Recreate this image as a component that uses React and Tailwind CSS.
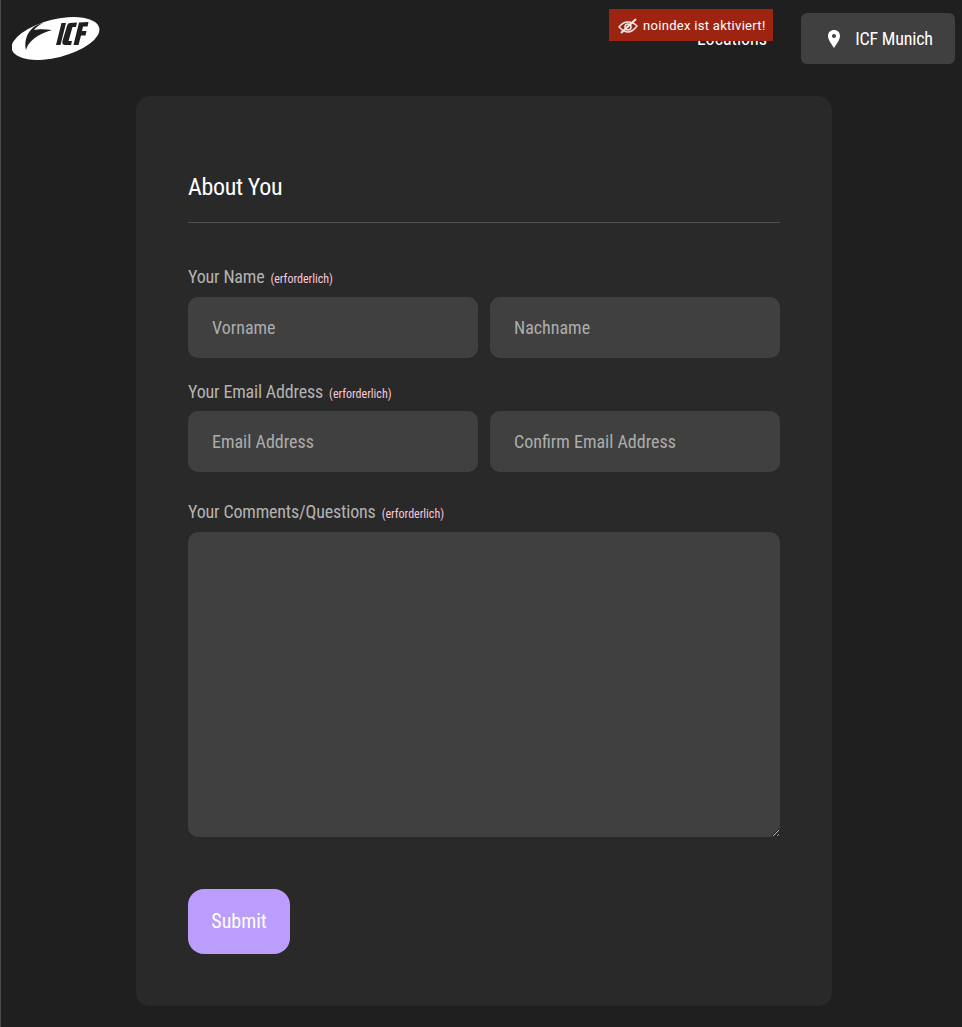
import React from "react";

const Req = () => (
  <span className="ml-[6px] text-[12px] tracking-normal text-[#f9c6dc]">(erforderlich)</span>
);

const Logo = () => (
  <svg width="88" height="45" viewBox="0 0 88 45" className="block">
    <ellipse cx="43.5" cy="22.5" rx="45" ry="19" transform="rotate(-14 43.5 22.5)" fill="#fff" />
    <path fill="#1f1f1f" d="M31 7C20 9 11 20 14 34C16 26 25 18 40 14C33 13 26 13 22 14C24 11 27 9 31 7Z" />
    <path fill="#1f1f1f" d="M49.5 7L54 7L48.5 29L44 29Z" />
    <path fill="#1f1f1f" d="M58 7L65 6.5L64 11L60.5 11L56.5 25L60 25L59 29L53.5 29C50.5 29 50 27 50.5 25L55 10C55.5 8 56.5 7 58 7Z" />
    <path fill="#1f1f1f" d="M67 6.5L76.5 6L75.5 10.5L71 10.5L70 15L74.5 15L73.5 19.5L69 19.5L66.5 29L61.5 29Z" />
  </svg>
);

const Input = ({ placeholder }) => (
  <input
    placeholder={placeholder}
    className="h-[61px] w-full rounded-[10px] bg-[#404040] px-[24px] pb-[1px] text-[18px] text-white outline-none placeholder:text-[#adadad]"
  />
);

const Label = ({ children, className = "" }) => (
  <label className={`block text-[18px] leading-[24px] tracking-[-0.17px] text-[#b3b3b3] ${className}`}>
    {children}
    <Req />
  </label>
);

export default function App() {
  return (
    <div className="min-h-[1027px] border-l border-l-[#4a4a4a] bg-[#1f1f1f] font-['Roboto_Condensed','Roboto',sans-serif]">
      <header className="relative flex h-[96px] items-start justify-between pl-[11px] pr-[7px]">
        <div className="mt-[16px]">
          <Logo />
        </div>
        <div className="mt-[13px] flex items-center gap-[34px]">
          <a className="text-[18px] text-white">Locations</a>
          <button className="flex h-[51px] w-[154px] items-center justify-center gap-[12px] rounded-[6px] bg-[#404040] pl-[2px] text-[18px] tracking-[-0.2px] text-white">
            <svg width="18" height="20" viewBox="0 0 18 20" fill="#fff">
              <path fillRule="evenodd" d="M9 1C5.4 1 3 3.6 3 7C3 11 7 15.5 9 19C11 15.5 15 11 15 7C15 3.6 12.6 1 9 1ZM9 5C10.2 5 11 5.9 11 7C11 8.1 10.2 9 9 9C7.8 9 7 8.1 7 7C7 5.9 7.8 5 9 5Z" />
            </svg>
            ICF Munich
          </button>
        </div>
        <div className="absolute left-[608px] top-[9px] flex h-[32px] w-[164px] items-center gap-[5px] bg-[#9c2410] pl-[9px] pt-[1px] font-['Roboto',sans-serif] text-[13px] tracking-[0.3px] text-white">
          <svg width="20" height="18" viewBox="0 0 20 18" fill="none" stroke="#e8e8e8" strokeWidth="1.5">
            <path d="M1 10C4 6 7 5 10 5C13 5 16 6 19 9C16 13 13 15 10 15C7 15 4 13 1 10Z" />
            <circle cx="10" cy="10" r="3" />
            <path d="M3 16L18 2" strokeWidth="2" />
          </svg>
          <span>noindex ist aktiviert!</span>
        </div>
      </header>
      <main className="ml-[135px] h-[910px] w-[696px] rounded-[14px] bg-[#292929] px-[52px] pt-[75px]">
        <h2 className="border-b border-b-[#525252] pb-[19px] text-[24px] leading-[32px] tracking-[-0.35px] text-white">About You</h2>
        <Label className="mt-[42px] mb-[6px]">Your Name</Label>
        <div className="grid grid-cols-2 gap-[12px]">
          <Input placeholder="Vorname" />
          <Input placeholder="Nachname" />
        </div>
        <Label className="mt-[22px] mb-[5px]">Your Email Address</Label>
        <div className="grid grid-cols-2 gap-[12px]">
          <Input placeholder="Email Address" />
          <Input placeholder="Confirm Email Address" />
        </div>
        <Label className="mt-[28px] mb-[6px]">Your Comments/Questions</Label>
        <textarea className="block h-[305px] w-full rounded-[10px] bg-[#404040] outline-none" />
        <button className="mt-[52px] h-[65px] w-[102px] rounded-[16px] bg-[#bb9efb] pb-[1px] text-[20px] text-white">Submit</button>
      </main>
    </div>
  );
}
